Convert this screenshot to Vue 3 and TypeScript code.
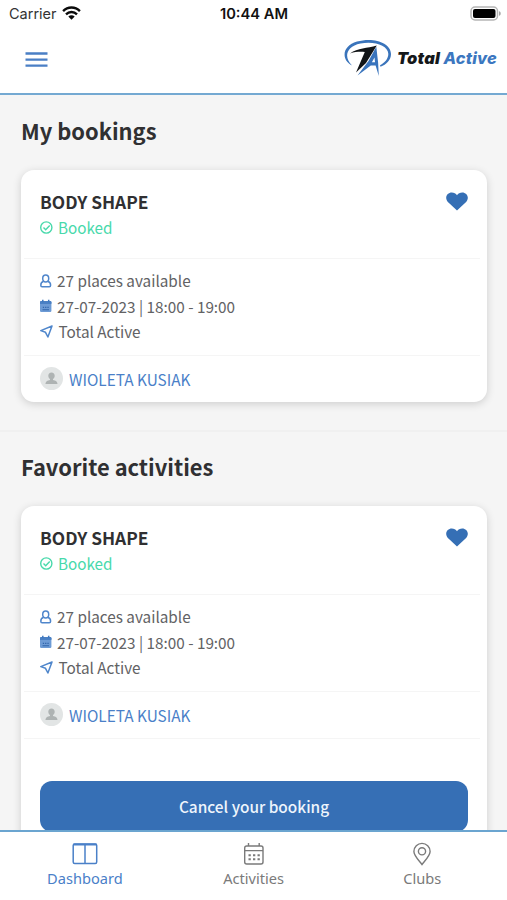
<script setup lang="ts">
interface Booking {
  id: number
  heading: string
  title: string
  places: number
  date: string
  club: string
  trainer: string
  cancellable: boolean
}

const bookings: Booking[] = [
  { id: 1, heading: 'My bookings', title: 'BODY SHAPE', places: 27, date: '27-07-2023 | 18:00 - 19:00', club: 'Total Active', trainer: 'WIOLETA KUSIAK', cancellable: false },
  { id: 2, heading: 'Favorite activities', title: 'BODY SHAPE', places: 27, date: '27-07-2023 | 18:00 - 19:00', club: 'Total Active', trainer: 'WIOLETA KUSIAK', cancellable: true },
]
</script>

<template>
  <div class="screen">
    <div class="status">
      <div class="carrier">
        <span>Carrier</span>
        <svg width="19" height="14" viewBox="0 0 19 14" fill="none" stroke="#0b0b0b" stroke-width="2.4">
          <path d="M1.100 5.100C5.800.3 13.200.3 17.900 5.100" />
          <path d="M4 8.300c3.100-3 7.900-3 11 0" />
          <path d="M6.300 10.400c1.800-1.700 4.600-1.700 6.400 0L9.500 13.700z" fill="#0b0b0b" stroke="none" />
        </svg>
      </div>
      <span class="clock">10:44 AM</span>
      <svg class="battery" width="32" height="16" viewBox="0 0 32 16">
        <rect x="1" y="1" width="26.500" height="13" rx="4" fill="#fff" stroke="#b5b5b5" stroke-width="1.500" />
        <rect x="3" y="3" width="22.500" height="9" rx="2" fill="#000" />
        <path d="M29 5.300c2.300.5 2.300 4 0 4.500z" fill="#a5a5a5" />
      </svg>
    </div>

    <header class="header">
      <button class="menu" aria-label="Menu">
        <svg width="23" height="17" viewBox="0 0 23 17" stroke="#4a7fc5" stroke-width="2.300">
          <path d="M.500 2.500h22M.500 8.600h22M.500 14.700h22" />
        </svg>
      </button>
      <div class="brand">
        <svg width="49" height="38" viewBox="0 0 49 38">
          <path d="M8 26.500C-3.500 20-1.500 7 13 2.600 29-2.100 47 3.500 47 15c0 6-4.500 10.500-10.500 12.800l-.5-1.500c5-2.600 8.500-6.800 8.300-11.600C43.900 6.200 30.500 1.900 16.500 4.400 1.500 7.600-.2 18.500 8 26.500z" fill="#3a74bb" />
          <path d="M6 14.400C14 9.300 23 9.400 32.800 6.600L22 24 12 33.500 20.800 13C16 12.600 11.500 12.800 6 14.400z" fill="#111417" />
          <path d="M32.300 7.800l1.800 15.700.7 13.500-3.200-10.500h-4.800L13.500 36.500 24.500 22z" fill="#3974bd" />
          <path d="M30.500 18.500l-2.600 4.700h3.100z" fill="#fff" />
        </svg>
        <span class="wordmark">Total <b>Active</b></span>
      </div>
    </header>

    <main class="content">
      <section v-for="b in bookings" :key="b.id" class="section">
        <h2>{{ b.heading }}</h2>
        <article class="card">
          <div class="top">
            <div>
              <h3>{{ b.title }}</h3>
              <p class="booked">
                <svg width="13" height="13" viewBox="0 0 13 13" fill="none" stroke="currentColor" stroke-width="1.400">
                  <circle cx="6.300" cy="6.500" r="5.600" />
                  <path d="M3.500 6.500l2.200 2.200 4-4.200" />
                </svg>
                <span>Booked</span>
              </p>
            </div>
            <svg class="heart" width="22" height="19" viewBox="0 0 22 19">
              <path d="M11 18.600L1.900 10C-2 5.300 1.400.4 5.700.4 8 .4 9.800 1.400 11 3.200 12.200 1.400 14 .4 16.300.4c4.300 0 7.700 4.900 3.800 9.600z" fill="#356fb5" />
            </svg>
          </div>

          <div class="details">
            <p>
              <svg width="13" height="14" viewBox="0 0 13 14" fill="none" stroke="#4f86cb" stroke-width="1.500">
                <ellipse cx="5.700" cy="4.500" rx="3" ry="3.400" />
                <path d="M3.400 7.600C1.600 8 .8 9.200.8 11.300c0 1 .4 1.500 1.300 1.500h7.200c.9 0 1.300-.5 1.300-1.500 0-2.100-.8-3.300-2.600-3.700" />
              </svg>
              <span>{{ b.places }} places available</span>
            </p>
            <p>
              <svg width="13" height="14" viewBox="0 0 13 14">
                <rect y="2" width="11.400" height="11" rx="1.200" fill="#6d9bd5" />
                <path d="M0 3.300Q0 2 1.200 2h9q1.200 0 1.200 1.300V5H0z" fill="#4a80c4" />
                <path d="M2.800.7v2.600M8.700.7v2.600" stroke="#3f78bf" stroke-width="1.500" />
                <path d="M2.500 10.700h6.500M2.800 8.400h1.300M5.100 8.400h1.300M7.400 8.400h1.300" stroke="#3165ab" stroke-width="1.100" />
              </svg>
              <span>{{ b.date }}</span>
            </p>
            <p class="place">
              <svg width="13" height="13" viewBox="0 0 13 13" fill="none" stroke="#4f86cb" stroke-width="1.500" stroke-linejoin="round">
                <path d="M12 1L.8 5.600l4.700 1.700 2.400 4.700z" />
              </svg>
              <span>{{ b.club }}</span>
            </p>
          </div>

          <div class="trainer">
            <svg width="23" height="23" viewBox="0 0 23 23">
              <circle cx="11.500" cy="11.500" r="11.500" fill="#e2e5e5" />
              <path d="M11.500 5.500c2 0 3.200 1.300 3.200 3.200 0 1.500-.8 2.700-1.700 3.400v.8c2.500.7 4.500 1.300 4.500 4.100h-12c0-2.800 2-3.400 4.500-4.100v-.8c-.9-.7-1.700-1.900-1.700-3.400 0-1.900 1.200-3.200 3.200-3.200z" fill="#aeb3b3" />
            </svg>
            <span>{{ b.trainer }}</span>
          </div>

          <div v-if="b.cancellable" class="action">
            <button class="cancel">Cancel your booking</button>
          </div>
        </article>
      </section>
    </main>

    <nav class="tabs">
      <a class="tab active">
        <svg width="26" height="24" viewBox="0 0 26 24" fill="none" stroke="currentColor" stroke-width="1.500">
          <rect x="1.200" y="2" width="23.500" height="19.500" rx="1.500" />
          <path d="M13 2v19.500" /><path d="M1.500 2.500h23" stroke-width="2" />
        </svg>
        <span>Dashboard</span>
      </a>
      <a class="tab">
        <svg width="26" height="24" viewBox="0 0 26 24" fill="none" stroke="currentColor" stroke-width="1.400">
          <rect x="3.700" y="4" width="18.300" height="18" rx="2" />
          <path d="M3.700 8.600h18.300M7.500 1v3M18.200 1v3" />
          <path d="M7.500 13.200h11.500M7.500 17.200h11.500" stroke-width="2" stroke-dasharray="2.300 2.200" />
        </svg>
        <span>Activities</span>
      </a>
      <a class="tab">
        <svg width="26" height="24" viewBox="0 0 26 24" fill="none" stroke="currentColor" stroke-width="1.400">
          <path d="M13 22.500C10 18.500 4.900 13.800 4.900 9.500a8.100 8.100 0 0 1 16.200 0c0 4.300-5.100 9-8.100 13z" />
          <circle cx="13" cy="9.300" r="3.600" />
        </svg>
        <span>Clubs</span>
      </a>
    </nav>
  </div>
</template>

<style>
body {
  margin: 0;
  overflow: hidden;
}
</style>

<style scoped>
* {
  box-sizing: border-box;
}
.screen {
  display: flex;
  flex-direction: column;
  height: 900px;
  overflow: hidden;
  background: #fff;
  color: #303032;
  font-family: 'Noto Sans CJK SC', 'Open Sans', sans-serif;
}
h2, h3, p {
  margin: 0;
}
svg {
  display: block;
  flex: none;
}
.status {
  display: grid;
  grid-template-columns: 1fr auto 1fr;
  align-items: center;
  height: 27px;
  flex: none;
  padding: 0 5px 0 9px;
  font-family: Inter, 'Liberation Sans', sans-serif;
  font-size: 14.5px;
  color: #333;
}
.carrier {
  display: flex;
  align-items: center;
  gap: 5px;
}
.carrier svg {
  margin-top: -2px;
}
.clock {
  margin-left: -3px;
  color: #111;
  font-weight: 600;
  font-size: 14.7px;
}
.battery {
  justify-self: end;
}
.header {
  display: flex;
  justify-content: space-between;
  align-items: center;
  height: 68px;
  flex: none;
  padding: 0 10px 2px 25px;
  border-bottom: 2px solid #74a9d2;
}
.menu {
  padding: 1px 0 0;
  border: 0;
  background: none;
}
.brand {
  display: flex;
  align-items: center;
  gap: 4px;
  padding-bottom: 2px;
}
.wordmark {
  font: italic 900 16.4px/24px Inter, Lato, sans-serif;
  letter-spacing: .2px;
  color: #15181a;
  white-space: nowrap;
}
.wordmark b {
  font-weight: 800;
  color: #3c77c0;
}
.content {
  flex: 1;
  min-height: 0;
  overflow: hidden;
  background: #f5f5f5;
}
.section {
  height: 337px;
  padding: 18px 20px 0 21px;
  border-bottom: 2px solid #f0f0f0;
}
.section + .section {
  height: auto;
  padding-top: 17px;
  border: 0;
}
h2 {
  height: 57px;
  font-size: 21.900px;
  line-height: 36px;
  font-weight: 700;
}
.card {
  background: #fff;
  border-radius: 13px;
  box-shadow: 0 2px 9px rgba(0, 0, 0, .16);
  padding: 0 7px 0 3px;
  height: 232px;
}
.section + .section .card {
  height: 360px;
}
.top {
  display: flex;
  justify-content: space-between;
  height: 89px;
  padding: 19px 12px 0 16px;
  border-bottom: 1px solid #f5f5f5;
}
h3 {
  font-size: 17.350px;
  line-height: 26px;
  font-weight: 700;
}
.booked {
  display: flex;
  align-items: center;
  gap: 5px;
  font-size: 15.250px;
  line-height: 25px;
  color: #48d9ab;
}
.heart {
  margin-top: 3px;
}
.details {
  height: 97px;
  padding: 8.500px 16px 0;
  border-bottom: 1px solid #f5f5f5;
  color: #626264;
}
.details p {
  display: flex;
  align-items: center;
  gap: 4px;
  height: 25.600px;
  font-size: 15.300px;
  line-height: 26px;
}
.details svg {
  margin-top: 1px;
}
.details .place {
  gap: 5.500px;
  line-height: 25px;
}
.trainer {
  display: flex;
  align-items: center;
  gap: 6px;
  height: 46px;
  padding: 0 16px;
  font-size: 15.350px;
  color: #4a7fc8;
}
.trainer svg {
  margin-top: -1px;
}
.trainer span {
  line-height: 24px;
}
.action {
  border-top: 1px solid #f5f5f5;
  padding: 41.500px 12px 0 16px;
}
.cancel {
  display: block;
  width: 100%;
  height: 51px;
  padding: 0;
  border: 0;
  border-radius: 12px;
  background: #366fb5;
  color: #eef5fc;
  font: 500 15.400px/51px 'Noto Sans CJK SC', sans-serif;
}
.tabs {
  display: grid;
  grid-template-columns: repeat(3, 168.700px);
  height: 70px;
  flex: none;
  padding: 10px 0 0 .5px;
  border-top: 2px solid #6ba5d0;
  background: #fff;
}
.tab {
  display: flex;
  flex-direction: column;
  align-items: center;
  color: #7a7a7a;
  font: 14.600px/24px 'Noto Sans', 'Open Sans', sans-serif;
}
.tab.active {
  color: #4a80c8;
}
</style>
